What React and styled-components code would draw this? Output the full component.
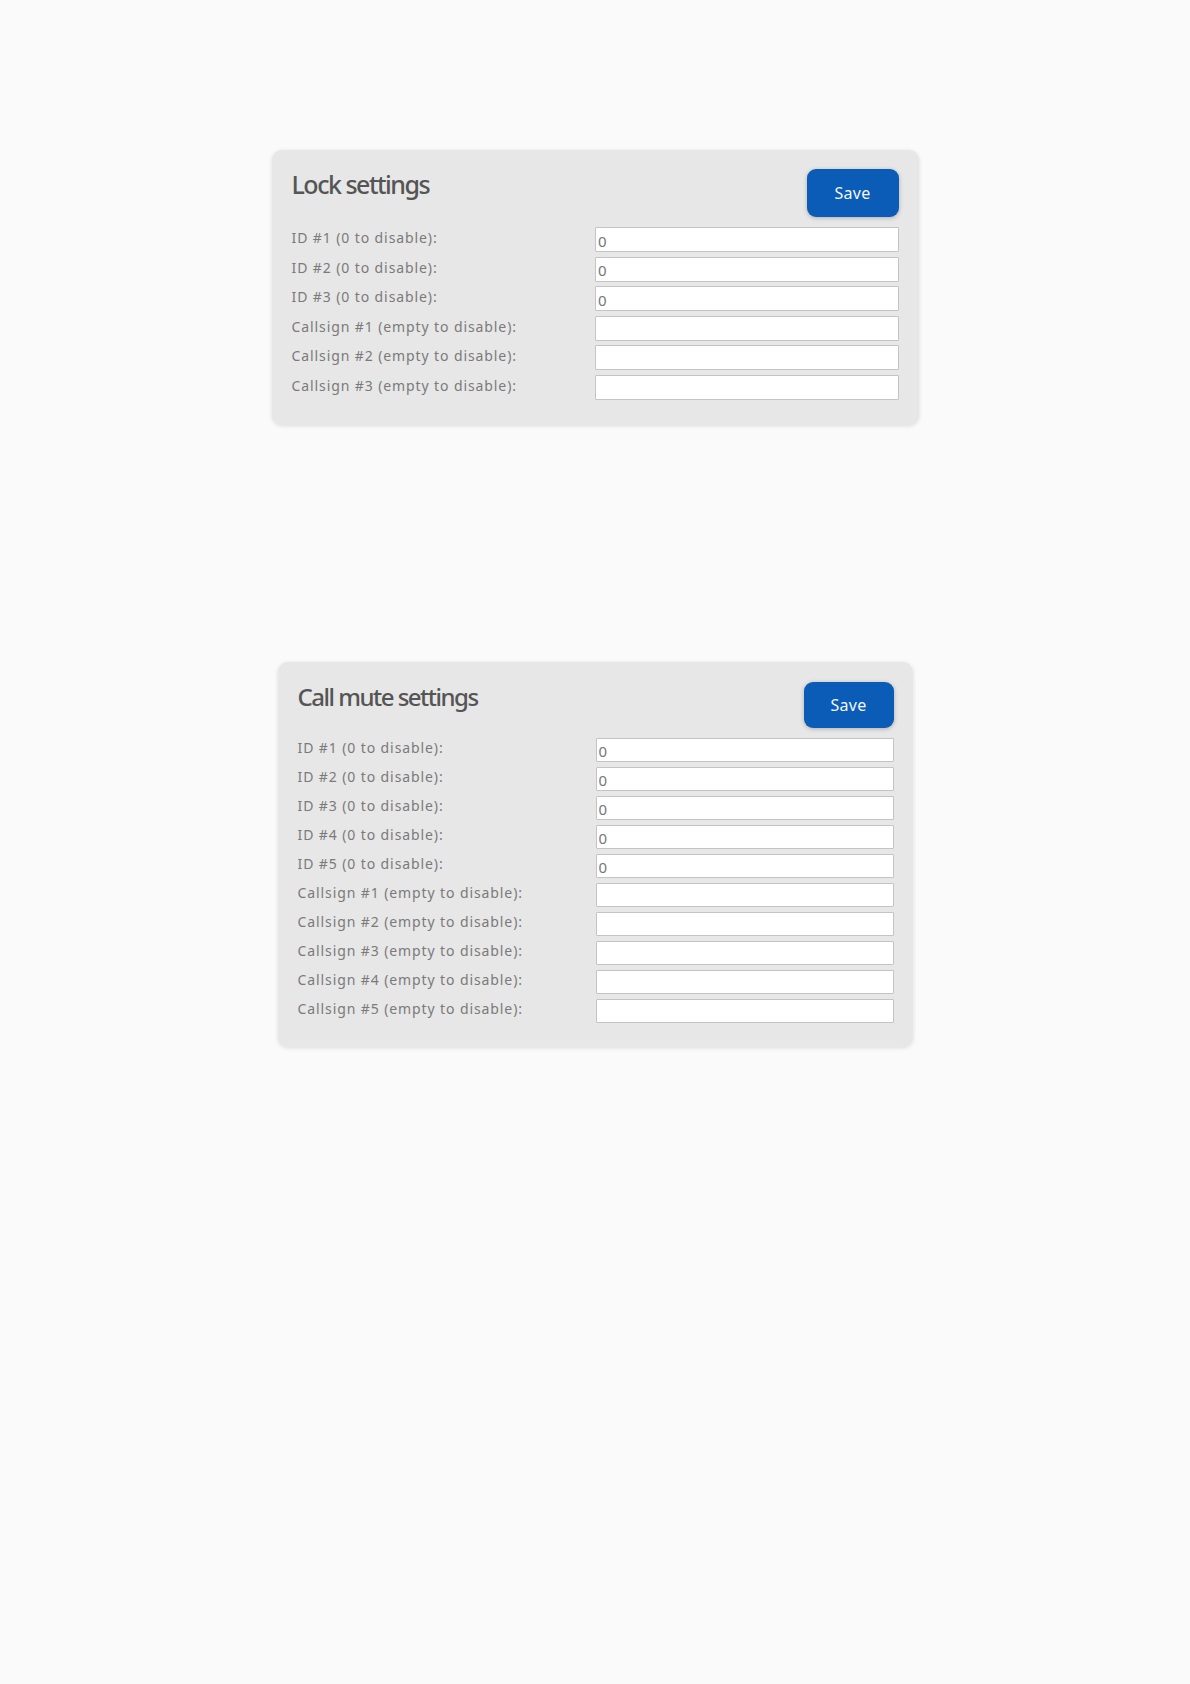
import styled, { createGlobalStyle } from "styled-components";

const GlobalStyle = createGlobalStyle`
  html, body {
    margin: 0;
    padding: 0;
    background: #fafafa;
  }
  body {
    font-family: "Noto Sans", "Open Sans", sans-serif;
  }
`;

const Page = styled.div`
  display: flex;
  flex-direction: column;
  align-items: center;
  padding-top: 150px;
  min-height: 1684px;
  box-sizing: border-box;
`;

const Card = styled.section`
  box-sizing: border-box;
  width: ${(p) => (p.$dense ? "635px" : "647px")};
  margin-top: ${(p) => (p.$dense ? "237px" : "0")};
  padding: ${(p) => (p.$dense ? "20px 19px 24px 20px" : "19px 20px 25px 20px")};
  background: #e7e7e7;
  border-radius: 10px;
  box-shadow: 0 1px 4px rgba(0, 0, 0, 0.12);
`;

const Header = styled.div`
  display: flex;
  justify-content: space-between;
  align-items: flex-start;
  margin-bottom: 10px;
`;

const Title = styled.h2`
  margin: 0;
  font-size: ${(p) => (p.$dense ? "24px" : "25px")};
  line-height: 30px;
  font-weight: 500;
  letter-spacing: -1.5px;
  color: #555;
`;

const SaveButton = styled.button`
  width: ${(p) => (p.$dense ? "90px" : "92px")};
  height: ${(p) => (p.$dense ? "46px" : "48px")};
  border: none;
  border-radius: 9px;
  background: #0b5cb7;
  color: #f2f6fb;
  font-family: "Noto Sans", sans-serif;
  font-size: 16px;
  letter-spacing: 0.3px;
  box-shadow: 0 1px 4px rgba(0, 0, 0, 0.25);
  cursor: pointer;
`;

const Fields = styled.div`
  display: grid;
  grid-template-columns: 1fr 1fr;
  row-gap: ${(p) => (p.$dense ? "5px" : "4.6px")};
  align-items: center;
`;

const Label = styled.label`
  font-size: 14px;
  line-height: 18px;
  margin-top: -3px;
  color: #7a7a7a;
  letter-spacing: 0.9px;
`;

const Input = styled.input`
  box-sizing: border-box;
  width: 100%;
  height: ${(p) => (p.$dense ? "24px" : "25px")};
  margin: 0;
  padding: 2px 2px 0;
  border: 1px solid #c4c4c4;
  border-radius: 1px;
  background: #fff;
  font-family: "Noto Sans", sans-serif;
  font-size: 15px;
  color: #777;
  outline: none;
`;

const lockFields = [
  ["ID #1 (0 to disable):", "0"],
  ["ID #2 (0 to disable):", "0"],
  ["ID #3 (0 to disable):", "0"],
  ["Callsign #1 (empty to disable):", ""],
  ["Callsign #2 (empty to disable):", ""],
  ["Callsign #3 (empty to disable):", ""],
];

const muteFields = [
  ["ID #1 (0 to disable):", "0"],
  ["ID #2 (0 to disable):", "0"],
  ["ID #3 (0 to disable):", "0"],
  ["ID #4 (0 to disable):", "0"],
  ["ID #5 (0 to disable):", "0"],
  ["Callsign #1 (empty to disable):", ""],
  ["Callsign #2 (empty to disable):", ""],
  ["Callsign #3 (empty to disable):", ""],
  ["Callsign #4 (empty to disable):", ""],
  ["Callsign #5 (empty to disable):", ""],
];

function SettingsCard({ title, fields, dense }) {
  return (
    <Card $dense={dense}>
      <Header>
        <Title $dense={dense}>{title}</Title>
        <SaveButton $dense={dense}>Save</SaveButton>
      </Header>
      <Fields $dense={dense}>
        {fields.map(([label, value], i) => (
          <div key={`f-${i}`} style={{ display: "contents" }}>
            <Label>{label}</Label>
            <Input $dense={dense} defaultValue={value} />
          </div>
        ))}
      </Fields>
    </Card>
  );
}

export default function App() {
  return (
    <>
      <GlobalStyle />
      <Page>
        <SettingsCard title="Lock settings" fields={lockFields} />
        <SettingsCard title="Call mute settings" fields={muteFields} dense />
      </Page>
    </>
  );
}
